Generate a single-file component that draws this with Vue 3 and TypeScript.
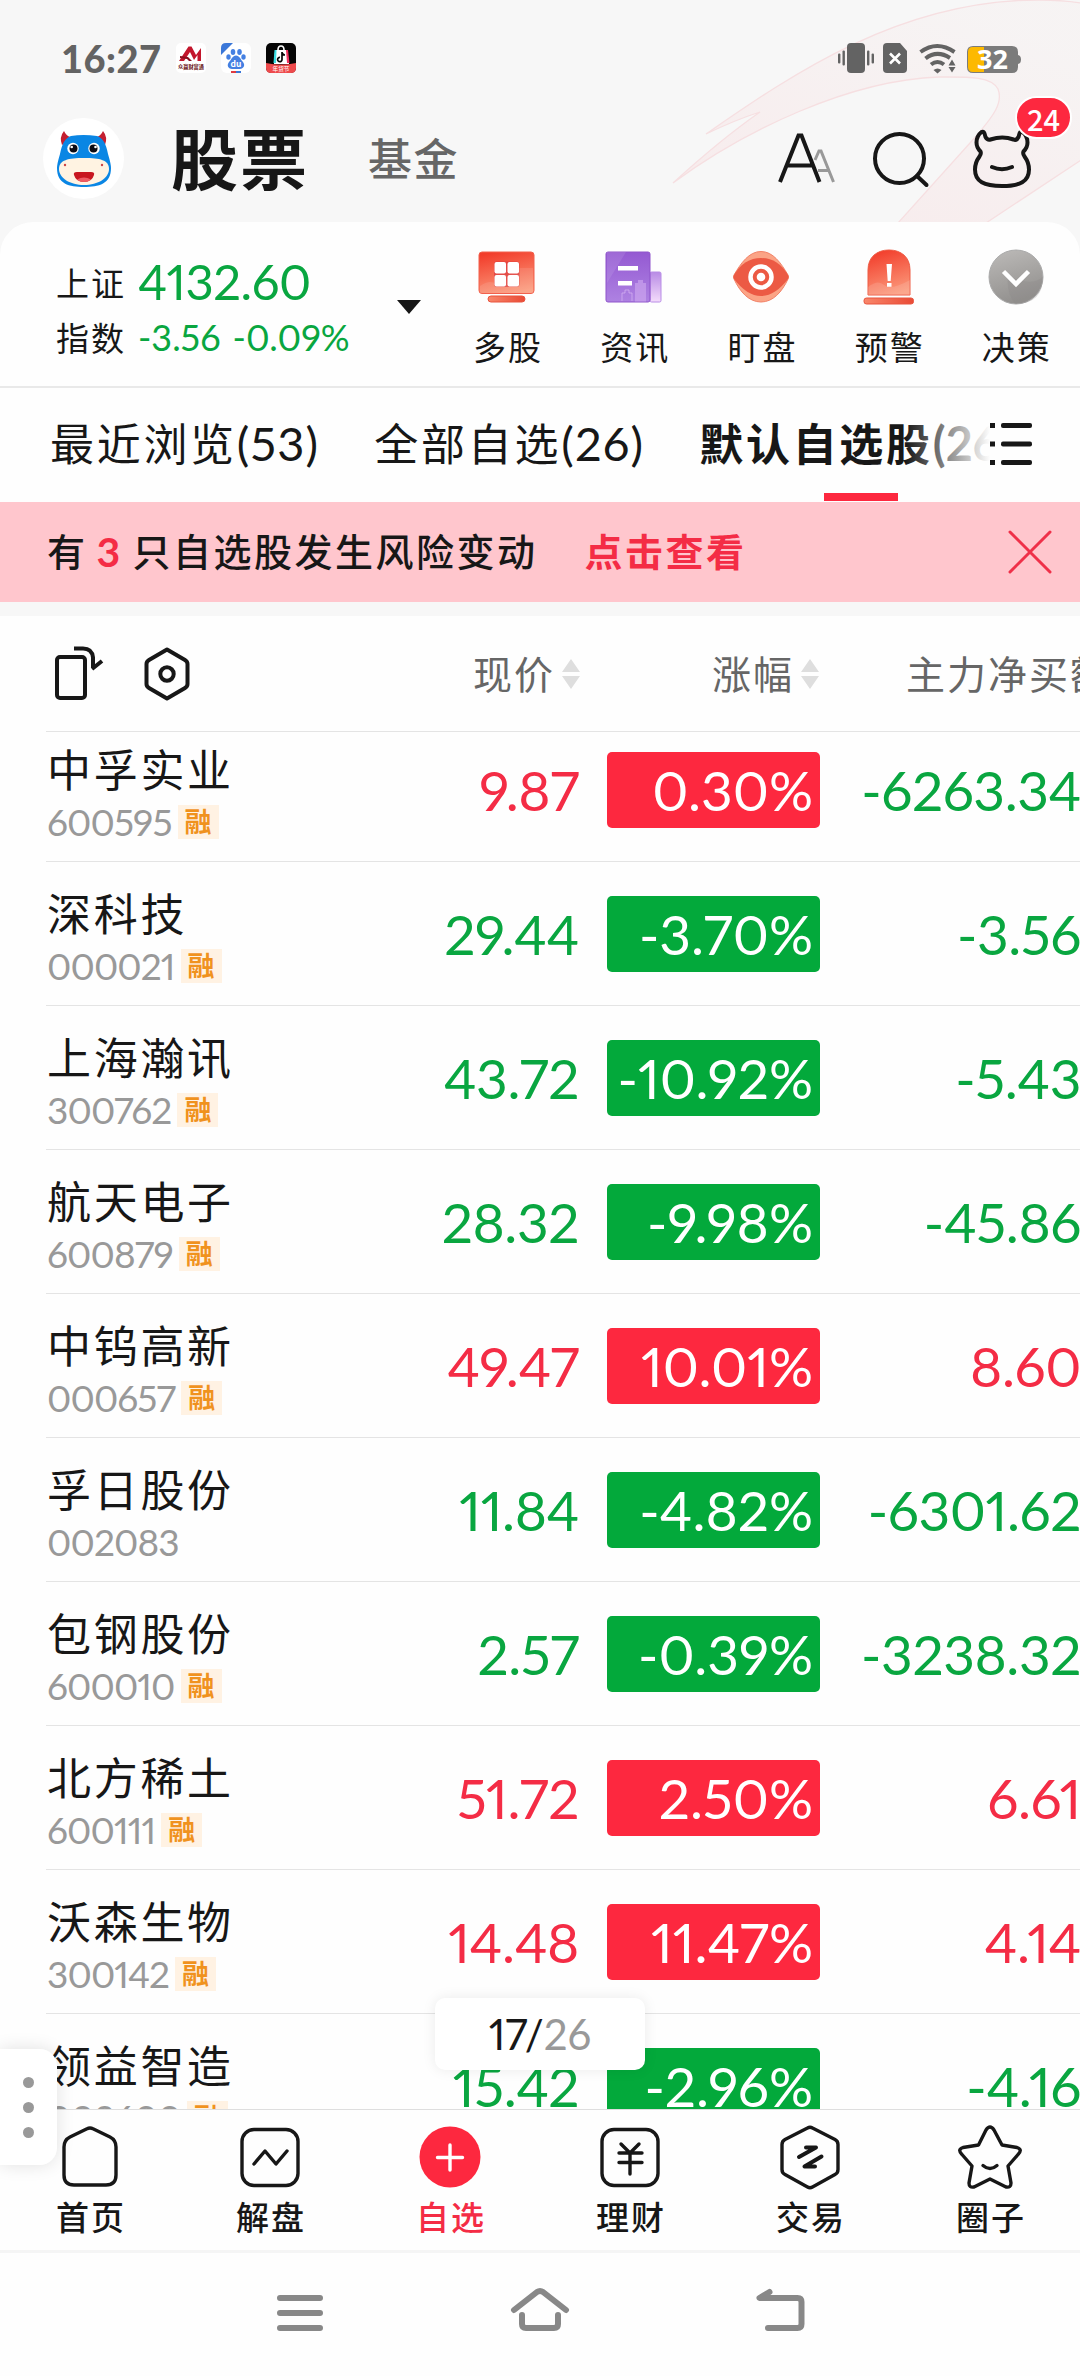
<script setup lang="ts">
interface Stock {
  name: string
  code: string
  margin: boolean
  price: string
  change: string
  flow: string
  up: boolean
}

const stocks: Stock[] = [
  { name: '中孚实业', code: '600595', margin: true, price: '9.87', change: '0.30%', flow: '-6263.34', up: true },
  { name: '深科技', code: '000021', margin: true, price: '29.44', change: '-3.70%', flow: '-3.56', up: false },
  { name: '上海瀚讯', code: '300762', margin: true, price: '43.72', change: '-10.92%', flow: '-5.43', up: false },
  { name: '航天电子', code: '600879', margin: true, price: '28.32', change: '-9.98%', flow: '-45.86', up: false },
  { name: '中钨高新', code: '000657', margin: true, price: '49.47', change: '10.01%', flow: '8.60', up: true },
  { name: '孚日股份', code: '002083', margin: false, price: '11.84', change: '-4.82%', flow: '-6301.62', up: false },
  { name: '包钢股份', code: '600010', margin: true, price: '2.57', change: '-0.39%', flow: '-3238.32', up: false },
  { name: '北方稀土', code: '600111', margin: true, price: '51.72', change: '2.50%', flow: '6.61', up: true },
  { name: '沃森生物', code: '300142', margin: true, price: '14.48', change: '11.47%', flow: '4.14', up: true },
  { name: '领益智造', code: '002600', margin: true, price: '15.42', change: '-2.96%', flow: '-4.16', up: false },
]

const shortcuts: string[] = ['多股', '资讯', '盯盘', '预警', '决策']
const navItems: string[] = ['首页', '解盘', '自选', '理财', '交易', '圈子']
</script>

<template>
  <div class="screen">
    <header class="top">
      <svg class="swoosh" width="1080" height="222" viewBox="0 0 1080 222">
        <defs>
          <linearGradient id="sw" x1="0" y1="1" x2="0.6" y2="0">
            <stop offset="0" stop-color="#f8dfe1" stop-opacity=".55" />
            <stop offset="1" stop-color="#f6eeee" stop-opacity=".4" />
          </linearGradient>
        </defs>
        <path d="M706 134C790 76 900-1 1040 0Q1062 0 1081 3V160L986 223H898L970 143C996 114 1003 102 998 89C991 76 967 77 939 77C850 80 745 130 673 183Q720 140 760 112Q735 120 706 134Z" fill="url(#sw)" stroke="#f6dfe1" stroke-width="1.3" />
      </svg>

      <div class="status">
        <span class="clock">16:27</span>
        <div class="apps">
          <svg width="30" height="30" viewBox="0 0 30 30">
            <rect width="30" height="30" rx="5" fill="#fff" />
            <path d="M3 18 12.500 3.500h3L20 12l5-7v13h-3.500v-6L18 17l-4-8-6 9z" fill="#c3162c" />
            <path d="m4 13 8 1 4 4h-3l-2-2-7-1z" fill="#8c1020" />
            <text x="15" y="25.500" font-size="5.200" text-anchor="middle" font-weight="700" fill="#6b1620">众赢财富通</text>
          </svg>
          <svg width="30" height="30" viewBox="0 0 30 30">
            <rect width="30" height="30" rx="6" fill="#fff" />
            <path d="M0 12V5Q0 0 5 0h7z" fill="#3a77d8" />
            <g fill="#4480e2">
              <ellipse cx="12" cy="9" rx="2.3" ry="3" /><ellipse cx="18.5" cy="9" rx="2.3" ry="3" />
              <ellipse cx="7.5" cy="14" rx="2.2" ry="2.8" /><ellipse cx="22.5" cy="14" rx="2.2" ry="2.8" />
              <path d="M15 12.500c3.500 0 4.500 4 7 6.500 3 4-.5 7-3 7h-8c-3 0-6-3-3-7 2.500-2.500 3.500-6.500 7-6.500z" />
            </g>
            <text x="15" y="23.500" font-size="8.500" text-anchor="middle" font-weight="700" fill="#fff">du</text>
            <path d="M10 28h5v2h-5z" fill="#df3b40" /><path d="M15 28h5v2h-5z" fill="#3a77d8" />
          </svg>
          <svg width="30" height="30" viewBox="0 0 30 30">
            <rect width="30" height="30" rx="5" fill="#050505" />
            <path d="M9 7h12l2 14H8z" fill="#fff" /><path d="M8.500 7h2L10 20H7.500z" fill="#38dfe4" /><path d="M20 7h2l1.500 13H21z" fill="#f1335f" />
            <path d="M12 7q0-4 3-4t3 4" fill="none" stroke="#fff" stroke-width="1.600" />
            <path d="M16 9v7.500a2.200 2.200 0 1 1-2-2.200M16 9.500q.5 2.500 3 2.500" fill="none" stroke="#050505" stroke-width="1.700" />
            <path d="M0 20q15 3 30 0v5q0 5-5 5H5q-5 0-5-5z" fill="#ee4a4c" />
            <text x="15" y="28.300" font-size="5.600" text-anchor="middle" fill="#fff">年货节</text>
          </svg>
        </div>
        <svg class="signals" width="182" height="30" viewBox="0 0 182 30">
          <g fill="#636363">
            <rect x="9" width="18" height="30" rx="4" />
            <rect x="0" y="10.500" width="2.400" height="10" rx="1" /><rect x="4.500" y="7.500" width="2.400" height="15" rx="1" />
            <rect x="29" y="7.500" width="2.400" height="15" rx="1" /><rect x="33.600" y="10.500" width="2.400" height="10" rx="1" />
            <path d="M49 0H62l7 8v18q0 4-4 4H49q-4 0-4-4V4q0-4 4-4z" />
          </g>
          <path d="m52 10.500 10 10m0-10-10 10" stroke="#fff" stroke-width="2.600" />
          <g fill="none" stroke="#636363" stroke-width="4">
            <path d="M82.500 9q16.500-12 34 0" /><path d="M87.500 15.500q11.500-9 24.500-.5" /><path d="M93 21.500q6.500-5 13 0" />
          </g>
          <path d="M95.500 27q4-3 8 0l-4 3.500zM114 16.500l3.500 6h-7zM114 29.500l3.500-5.500h-7z" fill="#636363" />
          <path d="M135 3h39q6 0 6 6v3q3 .5 3 4.500t-3 4.500v3q0 6-6 6h-39q-6 0-6-6V9q0-6 6-6z" fill="#7b7b7b" />
          <path d="M146 4h-11q-5 0-5 5v15q0 5 5 5h11z" fill="#fdb900" />
          <text class="level" x="154.500" y="26" text-anchor="middle">32</text>
        </svg>
      </div>

      <div class="titlebar">
        <div class="avatar">
          <svg width="81" height="81" viewBox="0 0 81 81">
            <path d="M19 27q-3-8 2-14 2 5 8 7zM62 27q3-8-2-14-2 5-8 7z" fill="#c41f30" />
            <path d="M28 18q12-2 26 0 8 2 11 18 3 10 3 14c0 16-12 19-27 19S14 66 14 50q0-4 3-14 3-16 11-18z" fill="#0a86e4" />
            <path d="M41 40c16 0 25 2 25 11S55 67 41 67 16 60 16 51s9-11 25-11z" fill="#fff3e2" />
            <circle cx="30" cy="30.500" r="5.700" fill="#fff" /><circle cx="51" cy="30.500" r="5.700" fill="#fff" />
            <circle cx="30.500" cy="30.500" r="4" fill="#0b0b14" /><circle cx="50.500" cy="30.500" r="4" fill="#0b0b14" />
            <circle cx="28.700" cy="29" r="1.300" fill="#fff" /><circle cx="52.500" cy="29" r="1.300" fill="#fff" />
            <circle cx="22" cy="47" r="1.200" fill="#c44" /><circle cx="59" cy="47" r="1.200" fill="#c44" />
            <path d="M34 54h14q4 0 3 3-2 7-10 7t-10-7q-1-3 3-3z" fill="#c8161f" /><path d="M34 61.500q7-4 14 0-3 2.500-7 2.500t-7-2.500z" fill="#ee5b62" />
          </svg>
        </div>
        <span class="title">股票</span>
        <span class="subtitle">基金</span>
        <svg class="tools" width="300" height="100" viewBox="0 0 300 100" fill="none" stroke="#171717" stroke-width="4">
          <path d="m65 62 4-9h2l12.500 31M68 72.500h12" stroke="#999" stroke-width="3" />
          <path d="m30 84 18.500-46.500h3L69.500 84M37 67.500h27" />
          <circle cx="149.500" cy="60.500" r="24.500" /><path d="m167 78 9.500 9" stroke-linecap="round" />
          <path d="M231.500 34q-5 4-5 10.500 0 5 4 9 1 2-1 5-4.500 6-4.500 13c0 12 9 16.500 27 16.500s27-4.500 27-16.500q0-7-4.500-13-2-3-1-5 4-4 4-9 0-6.500-5-10.500-2-1-3 1.500l-1 3.500q-2 4-5 2.500-11-4-23 0-3 1-5-2.500l-1-3.500q-1-2.500-3-1.500zM242 69q10 4.500 20 0" stroke-linecap="round" stroke-linejoin="round" />
        </svg>
        <span class="badge">24</span>
      </div>
    </header>

    <section class="index">
      <div class="index-name"><span>上证</span><span>指数</span></div>
      <div class="quote">
        <div class="point num">4132.60</div>
        <div class="delta num"><span>-3.56</span><span>-0.09%</span></div>
      </div>
      <svg class="caret" width="24" height="14" viewBox="0 0 24 14"><path d="M0 0h24L12 14z" fill="#171717" /></svg>
      <div class="shortcuts">
        <div v-for="(label, i) in shortcuts" :key="label" class="shortcut">
          <svg width="60" height="60" viewBox="0 0 60 60">
            <defs>
              <linearGradient id="redg" x1=".3" y1="0" x2=".6" y2="1"><stop offset="0" stop-color="#f23d2b" /><stop offset="1" stop-color="#fb9a7c" /></linearGradient>
              <linearGradient id="purg" x1="0" y1="0" x2="0" y2="1"><stop offset="0" stop-color="#9459d2" /><stop offset="1" stop-color="#ae82e2" /></linearGradient>
              <linearGradient id="purl" x1="0" y1="0" x2="0" y2="1"><stop offset="0" stop-color="#b88be5" /><stop offset="1" stop-color="#f4dcfb" /></linearGradient>
              <linearGradient id="gryg" x1="0" y1="0" x2=".3" y2="1"><stop offset="0" stop-color="#bdbbb9" /><stop offset="1" stop-color="#93918f" /></linearGradient>
              <linearGradient id="bar" x1="0" y1="0" x2="1" y2="0"><stop offset="0" stop-color="#f9876b" /><stop offset="1" stop-color="#e94a35" /></linearGradient>
            </defs>
            <template v-if="i === 0">
              <rect x="2" y="5" width="55" height="41.500" rx="3" fill="url(#redg)" stroke="#f2604c" />
              <path d="M3 39q10-7 16-2t20-16h17v25H3z" fill="#fff" opacity=".1" />
              <rect x="17" y="14.500" width="25.500" height="25.500" rx="3" fill="#d5323c" opacity=".55" />
              <g fill="#fff"><rect x="17.500" y="15" width="11.500" height="11.500" rx="2" /><rect x="30.500" y="15" width="11.500" height="11.500" rx="2" /><rect x="17.500" y="28" width="11.500" height="11.500" rx="2" /><rect x="30.500" y="28" width="11.500" height="11.500" rx="2" /></g>
              <rect x="11" y="49" width="37" height="6" rx="3" fill="url(#bar)" stroke="#e8543f" />
            </template>
            <template v-else-if="i === 1">
              <rect x="46" y="25" width="11" height="30" rx="1.500" fill="url(#purl)" stroke="#b88ce6" />
              <rect x="2" y="5" width="44" height="50" rx="2" fill="url(#purg)" stroke="#8f55cb" />
              <path d="M3 36 22 5H3z" fill="#fff" opacity=".1" />
              <path d="M18 54V46h3v-3h4v3h3v8" fill="none" stroke="#d9b7f3" opacity=".7" /><path d="M31 54.500V36h3v-3h5v3h3v18.500z" fill="#d0aaf0" opacity=".6" />
              <path d="M14 19h20v4.500H14zM14 34h14v4.500H14z" fill="#fff" />
            </template>
            <template v-else-if="i === 2">
              <path d="M30 4.500C42 4.500 50 16 57 28q1 2 0 4C51 45 42 55 30 55S9 45 3 32q-1-2 0-4C10 16 18 4.500 30 4.500z" fill="#fba486" stroke="#f28268" />
              <path d="M3 28Q13 11 30 11T57 28q1 2 0 4Q44 49 30 49T3 32q-1-2 0-4z" fill="#ec5a44" />
              <circle cx="30" cy="30" r="10.500" fill="none" stroke="#fff" stroke-width="4.500" /><circle cx="30" cy="30" r="4.300" fill="#fff" />
            </template>
            <template v-else-if="i === 3">
              <path d="M9 48V23C9 10 18 3 30 3s21 7 21 20v25z" fill="url(#redg)" stroke="#ee5c45" />
              <path d="M9 40q10-8 16-2t26-5v15H9z" fill="#fff" opacity=".13" />
              <path d="M27.500 17h5.500l-1.300 17h-3zM28 36h4.500v3.800H28z" fill="#fff" />
              <rect x="5" y="51" width="49.500" height="6" rx="2.500" fill="url(#bar)" stroke="#e8543f" />
            </template>
            <template v-else>
              <circle cx="30" cy="30" r="27" fill="url(#gryg)" stroke="#aaa" />
              <path d="M22 29Q20 45 29 57 57 57 57 30 45 40 22 29z" fill="#8b8987" opacity=".3" />
              <path d="m17.500 24.500 12.500 12.500 12.500-12.500" fill="none" stroke="#fff" stroke-width="4.500" />
            </template>
          </svg>
          <span>{{ label }}</span>
        </div>
      </div>
    </section>

    <nav class="tabs">
      <span class="tab">最近浏览<span class="count num">(53)</span></span>
      <span class="tab">全部自选<span class="count num">(26)</span></span>
      <span class="tab active">默认自选股<span class="count num">(26)</span></span>
      <span class="fade"></span>
      <svg class="menu" width="42" height="42" viewBox="0 0 42 42" fill="#171717">
        <rect width="5" height="5" /><rect y="18.500" width="5" height="5" /><rect y="37" width="5" height="5" />
        <rect x="11" width="31" height="5" rx="2" /><rect x="11" y="18.500" width="31" height="5" rx="2" /><rect x="11" y="37" width="31" height="5" rx="2" />
      </svg>
      <span class="marker"></span>
    </nav>

    <div class="notice">
      <span>有</span><b class="num">3</b><span class="msg">只自选股发生风险变动</span><span class="link">点击查看</span>
      <svg width="42" height="42" viewBox="0 0 42 42"><path d="m1 1 40 40M41 1 1 41" stroke="#ef3049" stroke-width="3" stroke-linecap="round" /></svg>
    </div>

    <div class="columns">
      <svg class="col-icons" width="150" height="60" viewBox="0 0 150 60" fill="none" stroke="#171717" stroke-width="4">
        <rect x="10" y="13" width="28" height="41" rx="3" />
        <path d="M27 4.500h9q9 0 10 9v10M45 25l10-8" />
        <path d="m120 5.500 18 10.500q2.500 1.500 2.500 4v20q0 2.500-2.500 4L120 54.500 102 44q-2.500-1.500-2.500-4V20q0-2.500 2.500-4z" stroke-linejoin="round" />
        <circle cx="120" cy="30" r="6.700" />
      </svg>
      <div class="col price-h"><span>现价</span><svg width="18" height="30" viewBox="0 0 18 30"><path d="M9 0l9 13H0zM9 30l9-13H0z" fill="#dedede" /></svg></div>
      <div class="col change-h"><span>涨幅</span><svg width="18" height="30" viewBox="0 0 18 30"><path d="M9 0l9 13H0zM9 30l9-13H0z" fill="#dedede" /></svg></div>
      <div class="col flow-h"><span>主力净买额</span></div>
    </div>

    <main class="list">
      <div class="rows">
        <div v-for="s in stocks" :key="s.code" class="row" :class="s.up ? 'up' : 'down'">
          <div class="who">
            <div class="name">{{ s.name }}</div>
            <div class="meta"><span class="code num">{{ s.code }}</span><span v-if="s.margin" class="tag">融</span></div>
          </div>
          <div class="price num">{{ s.price }}</div>
          <div class="pill num">{{ s.change }}</div>
          <div class="flow num">{{ s.flow }}</div>
        </div>
      </div>
    </main>

    <footer class="nav">
      <div v-for="(label, i) in navItems" :key="label" class="nav-item" :class="{ on: i === 2 }">
        <svg width="66" height="66" viewBox="0 0 66 66" fill="none" stroke="#171717" stroke-width="3.400" stroke-linecap="round" stroke-linejoin="round">
          <path v-if="i === 0" d="M30 4.800q3-1.600 6 0L53 13q6 3 6 10v28q0 10-10 10H17Q7 61 7 51V23q0-7 6-10z" />
          <template v-else-if="i === 1"><rect x="5" y="5.500" width="56" height="56" rx="12" /><path d="M17 40 28 27l11 13 11-13" /></template>
          <template v-else-if="i === 2"><circle cx="33" cy="33" r="30.500" fill="#fd283f" stroke="none" /><path d="M33 21v25M20.500 33.500h25" stroke="#fff" /></template>
          <template v-else-if="i === 3"><rect x="5" y="5.500" width="56" height="56" rx="12" /><path d="m24 20 9 9 9-9M22 29h23M22 38.500h23M33 29v21" /></template>
          <template v-else-if="i === 4"><path d="M30.500 4q2.500-1.500 5 0L58 15.500q3 1.500 3 5v25q0 3.500-3 5L35.500 63q-2.500 1.500-5 0L8 50.500q-3-1.500-3-5v-25q0-3.500 3-5z" /><path d="m22 33 17-9.500H29M44.500 32.500l-17 10H38" stroke-width="4" /></template>
          <template v-else><path d="M29 6q4-6 8 0l8 15 15 2.500q6 2 1 7L51 42l3 17q0 5-5 4l-16-8-16 8q-5 1-5-4l3-17L5 30.500q-5-5 1-7L21.500 21z" /><path d="M26 41.500q7 6 14 0" /></template>
        </svg>
        <span>{{ label }}</span>
      </div>
    </footer>

    <div class="system">
      <svg width="1080" height="123" viewBox="0 0 1080 123" fill="none" stroke="#888" stroke-width="6" stroke-linecap="round" stroke-linejoin="round">
        <path d="M280 45h40M280 60h40M280 75h40" />
        <path d="m514 57 23-18q3-2 6 0l23 18M522 62v9q0 4 4 4h28q4 0 4-4v-9" />
        <path d="m769.500 39-10 6h38q4 0 4 4v22q0 4-4 4H768" />
      </svg>
    </div>

    <div class="pager num">17/<span>26</span></div>
    <div class="handle"><i></i><i></i><i></i></div>
  </div>
</template>

<style>
body {
  margin: 0;
  background: #fefefe;
}
</style>

<style scoped>
.screen {
  position: relative;
  width: 1080px;
  height: 2376px;
  overflow: hidden;
  display: flex;
  flex-direction: column;
  background: #f7f7f7;
  color: #171717;
  font-family: 'Noto Sans CJK SC', sans-serif;
  white-space: nowrap;
}
svg {
  display: block;
  flex: none;
}
.num {
  font-family: Lato, 'Noto Sans CJK SC', sans-serif;
  font-feature-settings: 'pnum', 'kern';
}
.top {
  position: relative;
  height: 222px;
  flex: none;
}
.swoosh {
  position: absolute;
  inset: 0;
}
.status {
  position: relative;
  display: flex;
  align-items: center;
  height: 116px;
  padding-left: 61px;
}
.clock {
  width: 115px;
  font: 900 38px/40px Lato, sans-serif;
  letter-spacing: 0.5px;
  color: #636363;
}
.apps {
  display: flex;
  gap: 15px;
}
.signals {
  margin-left: 542px;
  overflow: visible;
}
.level {
  font: 700 27px 'Noto Sans', sans-serif;
  fill: #fff;
}
.titlebar {
  position: relative;
  display: flex;
  align-items: center;
  height: 85px;
  padding-left: 43px;
}
.avatar {
  width: 81px;
  height: 81px;
  border-radius: 50%;
  background: #fff;
}
.title {
  width: 197px;
  margin: 0 0 5px 47px;
  font-size: 67px;
  line-height: 84px;
  font-weight: 700;
  letter-spacing: 2px;
}
.subtitle {
  width: 382px;
  margin-bottom: 3px;
  font-size: 44px;
  line-height: 60px;
  font-weight: 500;
  letter-spacing: 1.5px;
  color: #666;
}
.tools {
  margin-bottom: 21px;
}
.badge {
  position: absolute;
  left: 1015px;
  top: -20px;
  width: 53px;
  height: 39px;
  border: 2px solid #fff;
  border-radius: 22px;
  background: #fd283f;
  color: #fff;
  text-align: center;
  font: 500 29px/40px 'Noto Sans CJK SC', sans-serif;
}
.index {
  display: flex;
  height: 164px;
  flex: none;
  border-bottom: 2px solid #e9e9e9;
  border-radius: 33px 33px 0 0;
  background: #fefefe;
}
.index-name {
  display: flex;
  flex-direction: column;
  width: 82px;
  padding: 33px 0 0 56px;
  font-size: 33px;
  line-height: 55px;
  letter-spacing: 2px;
}
.quote {
  width: 259px;
  padding-top: 29px;
  color: #09a640;
}
.point {
  font-size: 49px;
  line-height: 60px;
  letter-spacing: -0.4px;
}
.delta {
  display: flex;
  gap: 12px;
  font-size: 36px;
  line-height: 52px;
}
.caret {
  margin-top: 78px;
}
.shortcuts {
  display: flex;
  margin-left: 22.5px;
}
.shortcut {
  display: flex;
  flex: none;
  flex-direction: column;
  align-items: center;
  width: 127.2px;
  padding-top: 25px;
  font-size: 33px;
  line-height: 40px;
  letter-spacing: 2px;
}
.shortcut span {
  margin: 19px 0 0 2px;
}
.tabs {
  position: relative;
  display: flex;
  gap: 55px;
  height: 114px;
  flex: none;
  padding-left: 50px;
  background: #fefefe;
  font-size: 44px;
  line-height: 108px;
  letter-spacing: 2.7px;
}
.tab {
  flex: none;
  height: 108px;
}
.count {
  font-size: 47px;
  line-height: 1;
  letter-spacing: 1.2px;
}
.active {
  font-weight: 700;
}
.active .count {
  letter-spacing: 0;
}
.fade {
  position: absolute;
  left: 905px;
  top: 0;
  width: 175px;
  height: 114px;
  background: linear-gradient(90deg, rgba(254, 254, 254, 0), #fefefe 85px);
}
.menu {
  position: absolute;
  left: 990px;
  top: 35px;
}
.marker {
  position: absolute;
  left: 824px;
  top: 105px;
  width: 74px;
  height: 8px;
  background: #fd283f;
}
.notice {
  display: flex;
  align-items: center;
  height: 100px;
  flex: none;
  padding: 0 29px 0 47px;
  background: #ffc6cd;
  font-size: 38px;
  font-weight: 500;
  line-height: 96px;
  letter-spacing: 2.5px;
}
.notice span,
.notice b {
  height: 100px;
}
.notice b {
  width: 24px;
  margin: 0 12px 0 9px;
  color: #f42c45;
  font-size: 41px;
  font-weight: 700;
  line-height: 100px;
  letter-spacing: 0;
}
.notice .msg {
  margin-right: 47px;
}
.notice .link {
  color: #f42c45;
  font-weight: 700;
}
.notice svg {
  margin-left: auto;
  overflow: visible;
}
.columns {
  display: flex;
  align-items: center;
  height: 115px;
  flex: none;
  overflow: hidden;
  margin-top: 14px;
  background: #fefefe;
  color: #666;
  font-size: 39px;
  line-height: 60px;
  letter-spacing: 2px;
}
.col-icons {
  margin-left: 47px;
}
.col {
  display: flex;
  flex: none;
  align-items: center;
}
.col span {
  margin-bottom: 4px;
}
.col svg {
  margin-left: 7px;
}
.price-h {
  width: 383px;
  justify-content: flex-end;
}
.change-h {
  width: 239px;
  justify-content: flex-end;
}
.flow-h {
  margin-left: 87px;
}
.list {
  height: 1378px;
  flex: none;
  overflow: hidden;
  background: linear-gradient(#e4e4e4, #e4e4e4) 46px 0 / 1034px 1px no-repeat #fefefe;
}
.rows {
  margin-top: -13px;
}
.row {
  display: flex;
  align-items: center;
  height: 144px;
  background: linear-gradient(#e4e4e4, #e4e4e4) 46px 143px / 1034px 1px no-repeat;
  font-size: 55px;
  letter-spacing: -0.4px;
}
.row > div {
  box-sizing: border-box;
  flex: none;
}
.who {
  width: 347px;
  height: 144px;
  padding-left: 47px;
}
.name {
  padding-top: 20px;
  font-size: 44px;
  line-height: 60px;
  letter-spacing: 2.7px;
}
.meta {
  display: flex;
  align-items: center;
  height: 40px;
  margin-top: 4px;
}
.code {
  color: #999;
  font-size: 37px;
  line-height: 40px;
  letter-spacing: -0.9px;
}
.tag {
  width: 41px;
  height: 34px;
  margin-left: 6px;
  background: #fff2e3;
  color: #f0921e;
  text-align: center;
  font-size: 27px;
  font-weight: 700;
  line-height: 32px;
  letter-spacing: 0;
}
.price {
  width: 232px;
  text-align: right;
}
.pill {
  width: 213px;
  height: 76px;
  margin-left: 28px;
  padding-right: 7px;
  border-radius: 5px;
  color: #fff;
  text-align: right;
  line-height: 76px;
  letter-spacing: 0;
}
.flow {
  width: 261px;
  text-align: right;
}
.up .price,
.up .flow {
  color: #f42c45;
}
.down .price,
.down .flow,
.row:first-child .flow {
  color: #09a640;
}
.up .pill {
  background: #fd283f;
}
.down .pill {
  background: #03a93b;
}
.nav {
  display: flex;
  height: 140px;
  flex: none;
  border-top: 1px solid #dedede;
  background: #fefefe;
}
.nav-item {
  display: flex;
  flex-direction: column;
  align-items: center;
  width: 180px;
  padding-top: 14px;
  font-size: 33px;
  font-weight: 500;
  line-height: 40px;
  letter-spacing: 2px;
}
.nav-item span {
  margin: 6px 0 0 2px;
}
.on {
  color: #f42c45;
}
.system {
  height: 123px;
  flex: none;
  border-top: 3px solid #f5f5f5;
  background: #fefefe;
}
.pager {
  position: absolute;
  left: 435px;
  top: 1998px;
  width: 210px;
  height: 72px;
  border-radius: 10px;
  background: #fff;
  box-shadow: 0 0 14px rgba(0, 0, 0, 0.08);
  text-align: center;
  font-size: 42px;
  line-height: 73px;
}
.pager span {
  color: #999;
}
.handle {
  position: absolute;
  left: 0;
  top: 2049px;
  display: flex;
  flex-direction: column;
  align-items: center;
  justify-content: center;
  gap: 14px;
  width: 57px;
  height: 116px;
  border-radius: 0 17px 17px 0;
  background: #fff;
  box-shadow: 0 0 18px rgba(0, 0, 0, 0.12);
}
.handle i {
  width: 11px;
  height: 11px;
  border-radius: 50%;
  background: #999;
}
</style>
